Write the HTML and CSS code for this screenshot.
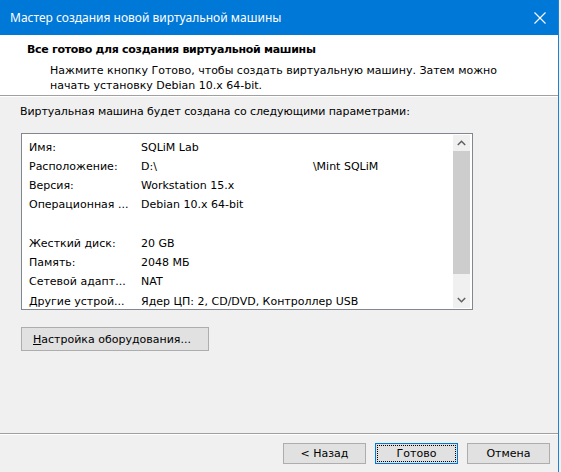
FILE: index.html
```html
<!DOCTYPE html>
<html lang="ru">
<head>
<meta charset="utf-8">
<title>Мастер создания новой виртуальной машины</title>
<link rel="stylesheet" href="styles.css">
</head>
<body>
<div class="window">
  <div class="titlebar">
    <span class="title">Мастер создания новой виртуальной машины</span>
    <svg class="close" width="12" height="12" viewBox="0 0 12 12"><path d="M0.5 0.5 L11.5 11.5 M11.5 0.5 L0.5 11.5" stroke="#fff" stroke-width="1.1" fill="none"/></svg>
  </div>
  <div class="header">
    <div class="h-title">Все готово для создания виртуальной машины</div>
    <div class="h-sub">Нажмите кнопку Готово, чтобы создать виртуальную машину. Затем можно<br>начать установку Debian 10.x 64-bit.</div>
  </div>
  <div class="main">
    <div class="label">Виртуальная машина будет создана со следующими параметрами:</div>
    <div class="listbox">
      <div class="rows">
        <div class="row"><span class="k">Имя:</span><span class="v">SQLiM Lab</span></div>
        <div class="row"><span class="k">Расположение:</span><span class="v">D:\<span class="hidden"></span>\Mint SQLiM</span></div>
        <div class="row"><span class="k">Версия:</span><span class="v">Workstation 15.x</span></div>
        <div class="row"><span class="k">Операционная ...</span><span class="v">Debian 10.x 64-bit</span></div>
        <div class="row"></div>
        <div class="row"><span class="k">Жесткий диск:</span><span class="v">20 GB</span></div>
        <div class="row"><span class="k">Память:</span><span class="v">2048 МБ</span></div>
        <div class="row"><span class="k">Сетевой адапт...</span><span class="v">NAT</span></div>
        <div class="row"><span class="k">Другие устрой...</span><span class="v">Ядер ЦП: 2, CD/DVD, Контроллер USB</span></div>
      </div>
      <div class="scrollbar">
        <div class="sb-btn"><svg width="9" height="6" viewBox="0 0 9 6"><path d="M0.8 5 L4.5 1.3 L8.2 5" stroke="#606060" stroke-width="1.5" fill="none"/></svg></div>
        <div class="sb-thumb"></div>
        <div class="sb-track"></div>
        <div class="sb-btn"><svg width="9" height="6" viewBox="0 0 9 6"><path d="M0.8 1 L4.5 4.7 L8.2 1" stroke="#606060" stroke-width="1.5" fill="none"/></svg></div>
      </div>
    </div>
    <button class="btn hw"><span class="ul">Н</span>астройка оборудования...</button>
  </div>
  <div class="footer">
    <button class="btn fbtn">&lt; Назад</button>
    <button class="btn fbtn default"><span class="focus">Готово</span></button>
    <button class="btn fbtn">Отмена</button>
  </div>
</div>
</body>
</html>
```
FILE: styles.css
```css
html, body {
  margin: 0;
  padding: 0;
  background: #f0f0f0;
}
body {
  width: 561px;
  height: 472px;
  overflow: hidden;
  font-family: "DejaVu Sans", Tahoma, sans-serif;
  font-size: 11px;
  color: #000;
}
.window {
  position: relative;
  width: 559px;
  height: 472px;
  border-right: 1px solid #1883d7;
  box-sizing: border-box;
  display: flex;
  flex-direction: column;
  overflow: hidden;
}
.titlebar {
  height: 35px;
  flex: none;
  background: #0078d7;
  color: #fff;
  display: flex;
  align-items: center;
  justify-content: space-between;
  padding: 0 12px 0 10px;
  font-family: "Noto Sans", "Open Sans", sans-serif;
  font-size: 12px;
}
.title { padding-bottom: 1px; }
.header {
  height: 61px;
  flex: none;
  box-sizing: border-box;
  background: #fff;
  border-bottom: 1px solid #a0a0a0;
  padding-top: 7px;
}
.h-title {
  margin-left: 27px;
  font-weight: bold;
  letter-spacing: -0.3px;
  line-height: 15px;
  margin-bottom: 6px;
}
.h-sub {
  margin-left: 50px;
  line-height: 15px;
}
.main {
  flex: 1;
  padding: 8px 0 0 0;
  box-shadow: inset 0 1px 0 #fff;
}
.label {
  margin-left: 20px;
  line-height: 15px;
  margin-bottom: 14px;
  letter-spacing: -0.08px;
}
.listbox {
  margin-left: 21px;
  width: 452px;
  height: 177px;
  box-sizing: border-box;
  border: 1px solid #828790;
  background: #fff;
  display: flex;
}
.rows {
  flex: 1;
  padding: 3.5px 0 0 7px;
}
.row {
  height: 19.25px;
  line-height: 19px;
  display: flex;
  white-space: nowrap;
}
.k { width: 112px; flex: none; }
.v { flex: none; }
.hidden { display: inline-block; width: 156px; }
.scrollbar {
  width: 17px;
  margin: 1px 2px 1px 0;
  background: #f0f0f0;
  display: flex;
  flex-direction: column;
}
.sb-btn {
  height: 16px;
  display: flex;
  align-items: center;
  justify-content: center;
}
.sb-thumb {
  height: 123px;
  background: #cdcdcd;
}
.sb-track { flex: 1; }
.btn {
  font-family: inherit;
  font-size: 11px;
  color: #000;
  background: #e1e1e1;
  border: 1px solid #adadad;
  border-radius: 0;
  padding: 0;
  margin: 0;
}
.hw {
  display: block;
  margin: 17px 0 0 21px;
  width: 188px;
  height: 24px;
  text-align: left;
  padding-left: 11px;
}
.ul { text-decoration: underline; }
.footer {
  height: 39px;
  flex: none;
  box-sizing: border-box;
  border-top: 1px solid #a0a0a0;
  box-shadow: inset 0 1px 0 #fff;
  display: flex;
  justify-content: flex-end;
  gap: 9px;
  padding: 9px 8px 0 0;
}
.fbtn {
  width: 83px;
  height: 21px;
}
.default {
  border-color: #0078d7;
  padding: 1px;
}
.focus {
  display: flex;
  align-items: center;
  justify-content: center;
  width: 100%;
  height: 100%;
  box-sizing: border-box;
  border: 1px dotted #000;
}
```
